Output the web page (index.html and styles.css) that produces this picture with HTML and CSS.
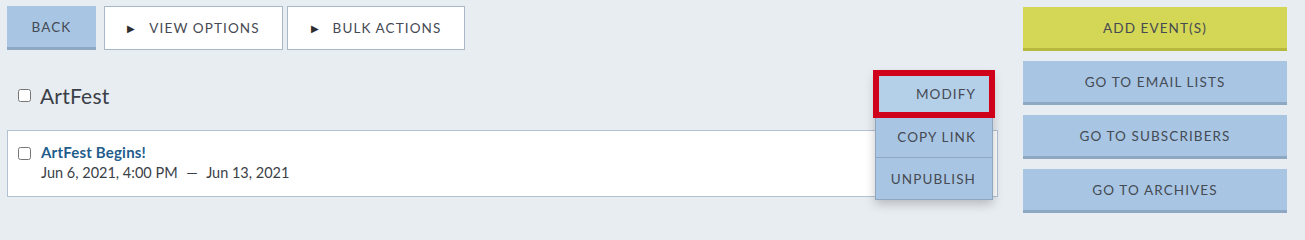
FILE: index.html
```html
<!DOCTYPE html>
<html lang="en">
<head>
<meta charset="utf-8">
<title>Events</title>
<link rel="stylesheet" href="styles.css">
</head>
<body>
<div class="page">
  <div class="main">
    <div class="toolbar">
      <button class="btn btn-blue btn-back">BACK</button>
      <button class="btn btn-white btn-view"><span class="tri">&#9654;</span>VIEW OPTIONS</button>
      <button class="btn btn-white btn-bulk"><span class="tri">&#9654;</span>BULK ACTIONS</button>
    </div>
    <div class="group-head">
      <input type="checkbox" class="cb">
      <span class="group-title">ArtFest</span>
    </div>
    <div class="card">
      <input type="checkbox" class="cb cb-card">
      <div class="card-body">
        <div class="event-title">ArtFest Begins!</div>
        <div class="event-date">Jun 6, 2021, 4:00 PM <span class="dash">&mdash;</span> Jun 13, 2021</div>
      </div>
    </div>
    <div class="menu">
      <div class="menu-item active">MODIFY</div>
      <div class="menu-item">COPY LINK</div>
      <div class="menu-item">UNPUBLISH</div>
    </div>
  </div>
  <div class="side">
    <button class="btn btn-yellow side-btn">ADD EVENT(S)</button>
    <button class="btn btn-blue side-btn">GO TO EMAIL LISTS</button>
    <button class="btn btn-blue side-btn">GO TO SUBSCRIBERS</button>
    <button class="btn btn-blue side-btn">GO TO ARCHIVES</button>
  </div>
</div>
</body>
</html>
```
FILE: styles.css
```css
* { box-sizing: border-box; }
html, body {
  margin: 0;
  padding: 0;
  background: #e8edf2;
  font-family: Lato, "Open Sans", sans-serif;
  color: #454a53;
}
.page {
  display: flex;
  padding: 6px 18px 0 7px;
  gap: 25px;
  height: 222px;
  overflow: hidden;
}
.main {
  position: relative;
  width: 991px;
  flex: none;
}
.toolbar {
  display: flex;
  height: 44px;
}
.btn {
  font-family: inherit;
  font-size: 13.5px;
  letter-spacing: 1.1px;
  color: #454a53;
  height: 44px;
  border: none;
  padding: 0;
  margin: 0;
  cursor: pointer;
  display: flex;
  align-items: center;
  justify-content: center;
}
.btn-blue {
  background: #a8c6e3;
  border-bottom: 3px solid #8ea8c3;
  padding-top: 1px;
}
.btn-yellow {
  background: #d4d656;
  border-bottom: 3px solid #b7b93f;
  padding-top: 1px;
}
.btn-white {
  background: #fff;
  border: 1px solid #a9b8c9;
}
.btn-back { width: 89px; }
.btn-view { width: 179px; margin-left: 8px; }
.btn-bulk { width: 178px; margin-left: 4px; }
.tri {
  font-size: 10px;
  margin-right: 14px;
  color: #2e2e2e;
  letter-spacing: 0;
}
.group-head {
  display: flex;
  align-items: center;
  height: 36px;
  margin-top: 27px;
  padding-left: 11px;
}
.cb {
  width: 13px;
  height: 13px;
  margin: 0;
  flex: none;
}
.group-title {
  font-size: 21px;
  margin-left: 9px;
  color: #3b3f47;
  letter-spacing: 0.2px;
}
.card {
  margin-top: 17px;
  background: #fff;
  border: 1px solid #b3c2d3;
  height: 67px;
  display: flex;
  align-items: flex-start;
  padding: 15px 0 0 10px;
}
.cb-card { margin-top: 1px; }
.card-body {
  margin-left: 10px;
  margin-top: -4px;
}
.event-title {
  font-size: 15px;
  font-weight: 700;
  color: #1f5d8c;
  line-height: 20px;
  letter-spacing: 0.2px;
}
.event-date {
  font-size: 14.5px;
  line-height: 22px;
  color: #3b3f47;
}
.dash { margin: 0 5px; }
.menu {
  position: absolute;
  left: 868px;
  top: 66px;
  width: 118px;
  background: #a8c6e3;
  border: 1px solid #8ea6bf;
  box-shadow: 0 4px 10px rgba(0, 0, 0, 0.22);
}
.menu-item {
  height: 42px;
  display: flex;
  align-items: center;
  justify-content: flex-end;
  padding-right: 16px;
  font-size: 13.5px;
  letter-spacing: 1.1px;
  border-top: 1px solid #8ea6bf;
}
.menu-item:first-child { border-top: none; }
.menu-item.active {
  background: #b4cfe8;
  outline: 6px solid #d0021b;
  outline-offset: -3px;
  position: relative;
}
.side {
  width: 264px;
  flex: none;
  display: flex;
  flex-direction: column;
  gap: 10px;
  padding-top: 1px;
}
.side-btn { width: 100%; }
```
